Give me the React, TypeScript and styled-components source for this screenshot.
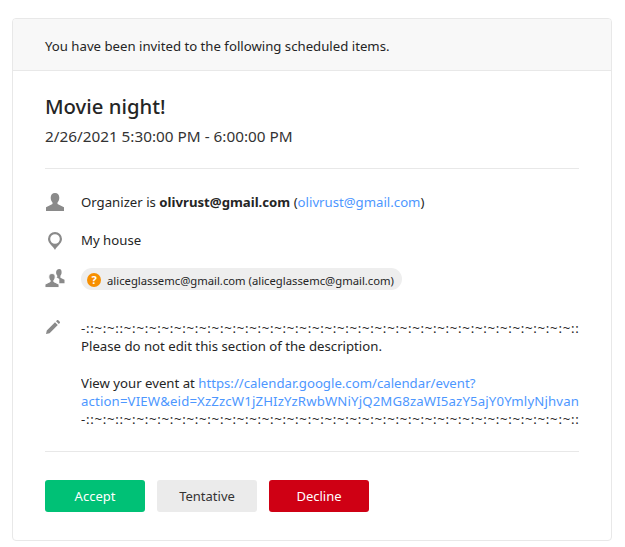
import { FC, ReactNode } from "react";
import styled, { createGlobalStyle } from "styled-components";

const SEPARATOR = "-::~:~::" + "~:".repeat(34) + "~:~::";

const PersonIcon: FC = () => (
  <svg width="20" height="20" viewBox="0 0 20 20">
    <path
      fill="#8a8a8a"
      d="M10 1C7.300 1 5.700 3 5.700 5.800c0 2 .8 3.700 1.800 4.700v1.500L1 15.300V19h18v-3.700L12.500 12v-1.500c1-1 1.800-2.700 1.800-4.700C14.300 3 12.700 1 10 1z"
    />
  </svg>
);

const PinIcon: FC = () => (
  <svg width="20" height="20" viewBox="0 0 20 20">
    <path
      fill="#8a8a8a"
      fillRule="evenodd"
      d="M10 20C8.700 16.500 3 13.500 3 9a7 7 0 0 1 14 0c0 4.500-5.700 7.500-7 11zM10 4.200a4.800 4.800 0 1 0 0 9.600 4.800 4.800 0 0 0 0-9.600z"
    />
  </svg>
);

const PeopleIcon: FC = () => (
  <svg width="20" height="20" viewBox="0 -1 20 20">
    <path
      fill="#8a8a8a"
      d="M14.300 -1c-2 0-3.200 1.500-3.200 3.500 0 1.400.5 2.500 1.200 3.200v1l-.8.500 2.800 1.900v4.100H19.500v-3.400l-4.100-2.100V5.700c.7-.7 1.200-1.800 1.200-3.200 0-2-.4-3.500-2.300-3.500z"
    />
    <path
      fill="#8a8a8a"
      stroke="#ffffff"
      strokeWidth="0.9"
      d="M7 3.500C5 3.500 3.800 5 3.800 7c0 1.500.6 2.700 1.400 3.400v1.300L0 14.300V17.500h14v-3.200l-5.200-2.600v-1.300c.8-.7 1.400-1.900 1.400-3.400 0-2-1.200-3.500-3.200-3.500z"
    />
  </svg>
);

const PencilIcon: FC = () => (
  <svg width="16" height="16" viewBox="0 0 16 16">
    <path
      fill="#8a8a8a"
      d="M1 15l.8-3.600L10 3.200 12.800 6l-8.200 8.200L1 15zM11 2.200l1-1c.4-.4.900-.4 1.300 0l1.500 1.500c.4.4.4.9 0 1.300l-1 1L11 2.200z"
    />
  </svg>
);

type RowProps = { icon: ReactNode; children: ReactNode };

const DetailRow: FC<RowProps> = ({ icon, children }) => (
  <StRow>
    <StIconCell>{icon}</StIconCell>
    <StRowBody>{children}</StRowBody>
  </StRow>
);

export default function App() {
  return (
    <>
      <GlobalStyle />
      <StCard>
        <StHeader>You have been invited to the following scheduled items.</StHeader>
        <StContent>
          <StTitle>Movie night!</StTitle>
          <StWhen>2/26/2021 5:30:00 PM - 6:00:00 PM</StWhen>
          <StDivider />
          <StDetails>
            <DetailRow icon={<PersonIcon />}>
              Organizer is <strong>olivrust@gmail.com</strong> (
              <StLink href="#">olivrust@gmail.com</StLink>)
            </DetailRow>
            <DetailRow icon={<PinIcon />}>My house</DetailRow>
            <DetailRow icon={<PeopleIcon />}>
              <StChip>
                <StChipBadge>?</StChipBadge>
                <StChipText>aliceglassemc@gmail.com (aliceglassemc@gmail.com)</StChipText>
              </StChip>
            </DetailRow>
          </StDetails>
          <StDescriptionRow>
            <StIconCell>
              <PencilIcon />
            </StIconCell>
            <StDescription>
              <StRule>{SEPARATOR}</StRule>
              <StLine>Please do not edit this section of the description.</StLine>
              <StLine>&nbsp;</StLine>
              <StLine>
                View your event at{" "}
                <StLink href="#">https://calendar.google.com/calendar/event?</StLink>
              </StLine>
              <StLine>
                <StLongLink href="#">
                  action=VIEW&amp;eid=XzZzcW1jZHIzYzRwbWNiYjQ2MG8zaWI5azY5ajY0YmlyNjhvan
                </StLongLink>
              </StLine>
              <StRule>{SEPARATOR}</StRule>
            </StDescription>
          </StDescriptionRow>
          <StDivider />
          <StActions>
            <StButton $kind="accept">Accept</StButton>
            <StButton $kind="tentative">Tentative</StButton>
            <StButton $kind="decline">Decline</StButton>
          </StActions>
        </StContent>
      </StCard>
    </>
  );
}

const GlobalStyle = createGlobalStyle`
  html, body {
    margin: 0;
    background: #fff;
  }
  body {
    font-family: "Noto Sans", "Open Sans", sans-serif;
    font-size: 13.2px;
    color: #252525;
  }
`;

const StCard = styled.div`
  width: 600px;
  height: 523px;
  box-sizing: border-box;
  margin: 18px 0 0 12px;
  border: 1px solid #e8e8e8;
  border-radius: 4px;
  overflow: hidden;
`;

const StHeader = styled.div`
  height: 52px;
  box-sizing: border-box;
  padding: 17px 32px 0;
  background: #f8f8f8;
  border-bottom: 1px solid #e8e8e8;
  font-size: 13.2px;
  line-height: 20px;
`;

const StContent = styled.div`
  padding: 21px 32px 0;
`;

const StTitle = styled.h1`
  margin: 0;
  font-size: 20.3px;
  font-weight: 500;
  line-height: 28px;
  color: #252525;
`;

const StWhen = styled.div`
  margin: 6px 0 22px;
  font-size: 15.3px;
  line-height: 20px;
  color: #333;
`;

const StDivider = styled.div`
  height: 1px;
  background: #e8e8e8;
`;

const StDetails = styled.div`
  display: flex;
  flex-direction: column;
  gap: 18px;
  margin-top: 23px;
`;

const StRow = styled.div`
  display: flex;
  align-items: center;
  min-height: 20px;
`;

const StIconCell = styled.div`
  flex: none;
  display: flex;
  width: 36px;
`;

const StRowBody = styled.div`
  flex: 1;
  min-width: 0;
  line-height: 20px;
  strong {
    font-weight: 700;
  }
`;

const StLink = styled.a`
  color: #4d97ff;
  text-decoration: none;
`;

const StLongLink = styled(StLink)`
  letter-spacing: 0.15px;
`;

const StChip = styled.span`
  display: inline-flex;
  align-items: center;
  gap: 6px;
  height: 22px;
  padding: 0 8px 0 6px;
  border-radius: 11px;
  background: #eeeeee;
  font-size: 11.27px;
`;

const StChipText = styled.span`
  padding-top: 3px;
`;

const StChipBadge = styled.span`
  display: flex;
  align-items: center;
  justify-content: center;
  width: 14px;
  height: 14px;
  margin-top: 1px;
  border-radius: 50%;
  background: #f78f00;
  color: #fff;
  font-size: 11px;
  font-weight: 700;
`;

const StDescriptionRow = styled.div`
  display: flex;
  margin: 29px 0 23px;
`;

const StDescription = styled.div`
  flex: 1;
  min-width: 0;
  overflow: hidden;
  line-height: 18.2px;
`;

const StLine = styled.div`
  white-space: nowrap;
`;

const StRule = styled(StLine)`
  letter-spacing: 0.73px;
`;

const StActions = styled.div`
  display: flex;
  gap: 12px;
  margin-top: 28px;
`;

const BUTTON_COLORS = {
  accept: { bg: "#00c176", fg: "#ffffff" },
  tentative: { bg: "#ebebeb", fg: "#333333" },
  decline: { bg: "#cf0014", fg: "#ffffff" },
};

const StButton = styled.button<{ $kind: keyof typeof BUTTON_COLORS }>`
  width: 100px;
  height: 32px;
  padding: 0;
  border: 0;
  border-radius: 3px;
  font-family: "Noto Sans", "Open Sans", sans-serif;
  font-size: 13px;
  background: ${(p) => BUTTON_COLORS[p.$kind].bg};
  color: ${(p) => BUTTON_COLORS[p.$kind].fg};
`;
